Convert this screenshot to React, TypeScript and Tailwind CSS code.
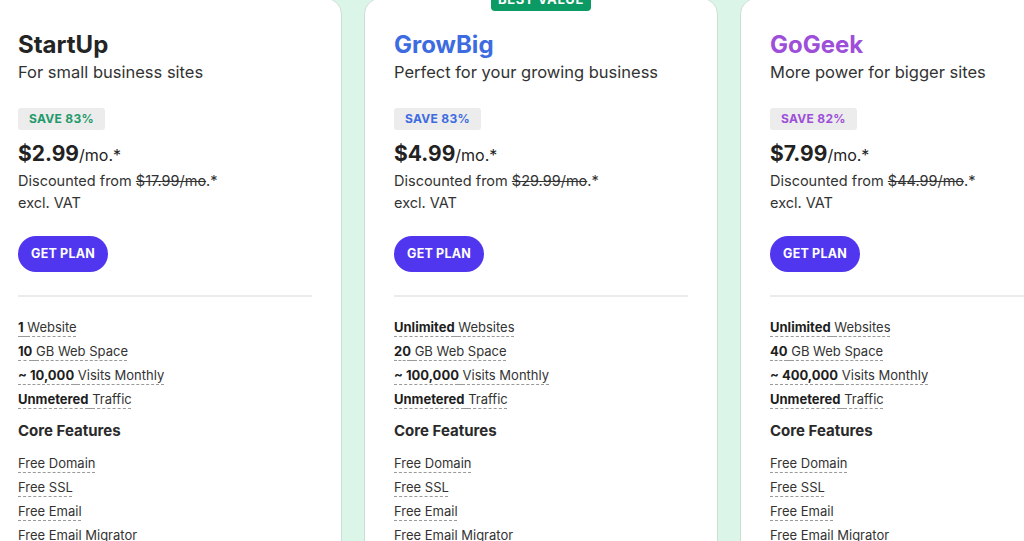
import React from "react";

type Plan = {
  name: string;
  tagline: string;
  color: string;
  title: string;
  save: string;
  price: string;
  was: string;
  features: [string, string][];
  best?: boolean;
};

const plans: Plan[] = [
  {
    name: "StartUp",
    tagline: "For small business sites",
    color: "text-[#1f9a6b]",
    title: "text-[#242424]",
    save: "SAVE 83%",
    price: "$2.99",
    was: "$17.99/mo",
    features: [
      ["1", "Website"],
      ["10", "GB Web Space"],
      ["~ 10,000", "Visits Monthly"],
      ["Unmetered", "Traffic"],
    ],
  },
  {
    name: "GrowBig",
    tagline: "Perfect for your growing business",
    color: "text-[#3d6be0]",
    title: "text-[#3d6be0]",
    save: "SAVE 83%",
    price: "$4.99",
    was: "$29.99/mo",
    best: true,
    features: [
      ["Unlimited", "Websites"],
      ["20", "GB Web Space"],
      ["~ 100,000", "Visits Monthly"],
      ["Unmetered", "Traffic"],
    ],
  },
  {
    name: "GoGeek",
    tagline: "More power for bigger sites",
    color: "text-[#9d4fd9]",
    title: "text-[#9d4fd9]",
    save: "SAVE 82%",
    price: "$7.99",
    was: "$44.99/mo",
    features: [
      ["Unlimited", "Websites"],
      ["40", "GB Web Space"],
      ["~ 400,000", "Visits Monthly"],
      ["Unmetered", "Traffic"],
    ],
  },
];

const core = ["Free Domain", "Free SSL", "Free Email", "Free Email Migrator"];

const dashed =
  "underline decoration-dashed decoration-[#9a9a9a] decoration-1 underline-offset-[4px]";

function Card({ p }: { p: Plan }) {
  return (
    <div className="relative w-[354px] shrink-0 bg-white border border-[#cddfd5] rounded-t-[16px] px-[29px] pt-[30px]">
      {p.best && (
        <div className="absolute left-1/2 -translate-x-1/2 top-[-12px] w-[100px] h-[24px] bg-[#0b9a63] rounded-b-[4px] flex items-end justify-center pb-[5px]">
          <span className="text-white text-[13px] font-bold tracking-[0.6px] leading-[13px]">
            BEST VALUE
          </span>
        </div>
      )}
      <div className={`text-[24px] leading-[32px] font-bold ${p.title}`}>{p.name}</div>
      <div className="text-[16.5px] leading-[24px] text-[#333] mt-[-1px]">{p.tagline}</div>
      <div
        className={`mt-[24px] flex w-fit items-center h-[22px] px-[11px] rounded-[3px] bg-[#ececec] text-[12px] font-bold tracking-[0.3px] ${p.color}`}
      >
        {p.save}
      </div>
      <div className="mt-[10px] leading-[28px] text-[#222]">
        <span className="text-[21px] font-bold">{p.price}</span>
        <span className="text-[16px]">/mo.*</span>
      </div>
      <div className="mt-[1px] text-[14.5px] leading-[22px] text-[#333]">
        Discounted from <span className="line-through">{p.was}</span>.*
      </div>
      <div className="text-[14.5px] leading-[22px] text-[#333]">excl. VAT</div>
      <div className="mt-[22px] flex items-center justify-center h-[36px] w-[90px] rounded-full bg-[#5136ef] text-white text-[12.5px] font-bold tracking-[0.2px]">
        GET PLAN
      </div>
      <div className="mt-[23px] h-[2px] bg-[#ececec]" />
      <div className="mt-[18px] flex flex-col">
        {p.features.map(([b, t]) => (
          <div key={t} className="h-[24px] leading-[24px] text-[13px] text-[#333]">
            <span className={dashed}>
              <span className="font-bold text-[#1e1e1e]">{b}</span> {t}
            </span>
          </div>
        ))}
      </div>
      <div className="mt-[8px] h-[24px] leading-[24px] text-[15px] font-bold text-[#2a2a2a]">
        Core Features
      </div>
      <div className="mt-[8px] flex flex-col">
        {core.map((c) => (
          <div key={c} className="h-[24px] leading-[24px] text-[13px] text-[#333]">
            <span className={dashed}>{c}</span>
          </div>
        ))}
      </div>
    </div>
  );
}

export default function App() {
  return (
    <div
      className="w-full h-[541px] overflow-hidden bg-[#dbf5e9]"
      style={{ fontFamily: "Inter, 'Noto Sans', sans-serif" }}
    >
      <div className="flex gap-[22px] ml-[-12px] mt-[-2px] h-[560px]">
        {plans.map((p) => (
          <Card key={p.name} p={p} />
        ))}
      </div>
    </div>
  );
}
